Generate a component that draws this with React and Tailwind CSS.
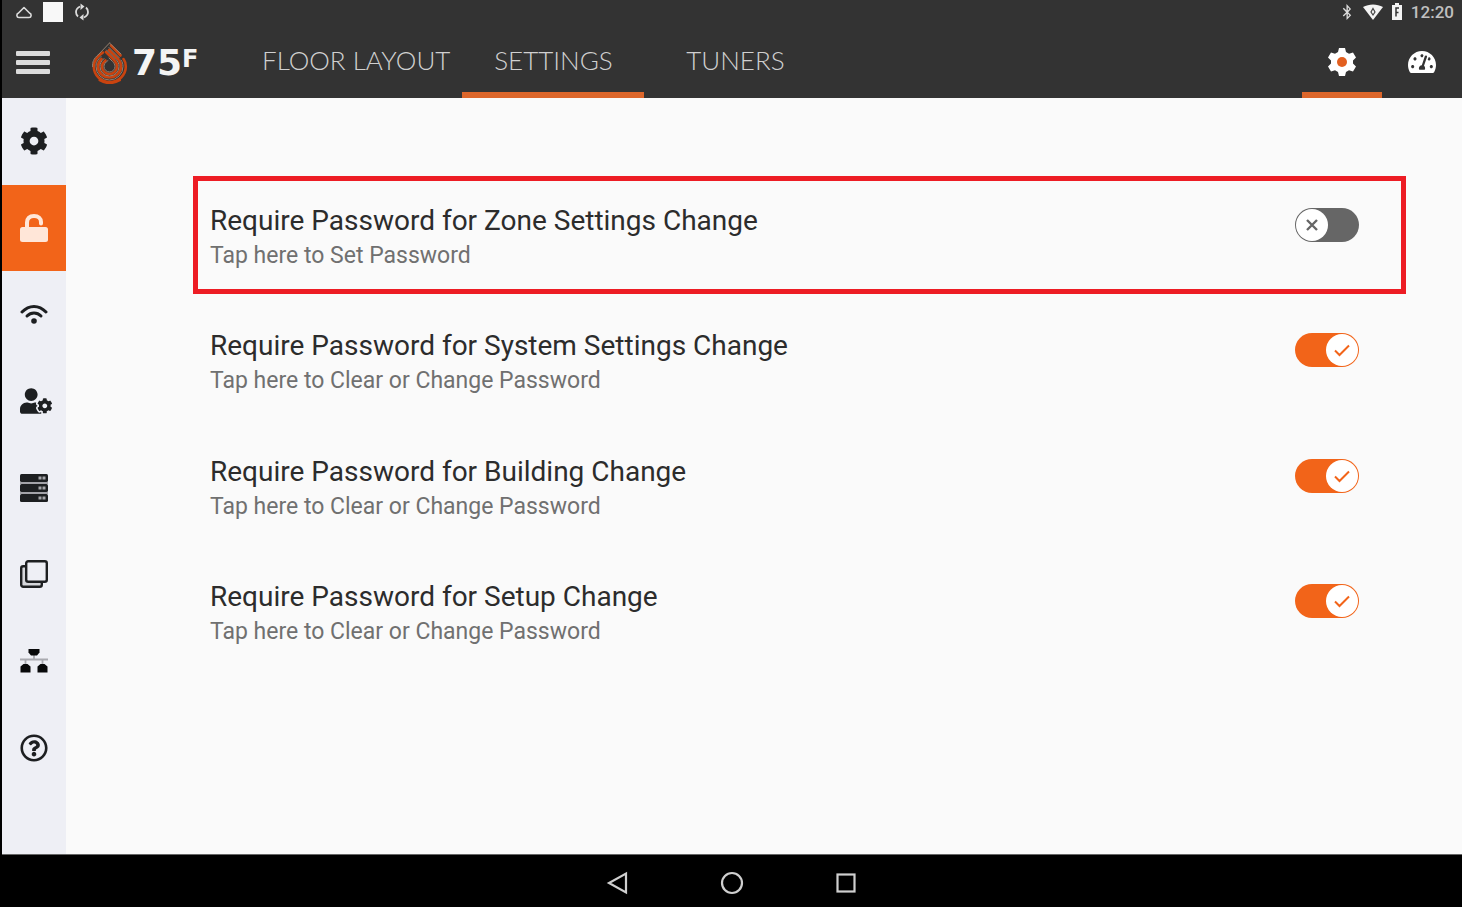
import React, { useState } from 'react';
import {
  FaBluetoothB,
  FaCog,
  FaRegQuestionCircle,
  FaTachometerAlt,
  FaUserCog,
} from 'react-icons/fa';

const UnlockIcon = () => (
  <svg className="h-7 w-7" viewBox="0 0 28 28" fill="none">
    <path d="M7 15V8.500C7 4.500 9.500 2 14 2s7 2.500 7 6v1.500" stroke="#ffe6d8" strokeWidth="4" strokeLinecap="round" />
    <rect x="0" y="13" width="28" height="15" rx="2.500" fill="#ffe6d8" />
  </svg>
);

const WifiIcon = () => (
  <svg className="h-7 w-7" viewBox="0 0 28 28" fill="none" stroke="#1d1f21" strokeWidth="3" strokeLinecap="round">
    <path d="M2 11C9 3.500 19 3.500 26 11" />
    <path d="M7 15c4-4 10-4 14 0" />
    <circle cx="14" cy="20" r="2.800" fill="#1d1f21" stroke="none" />
  </svg>
);

const ServerIcon = () => (
  <svg className="h-7 w-7" viewBox="0 0 28 28">
    {[0, 10, 20].map((y) => (
      <g key={y}>
        <rect y={y} width="28" height="8" rx="1.500" fill="#1d1f21" />
        <rect x="18.500" y={y + 2.5} width="3" height="3" fill="#a5a6aa" />
        <rect x="22.500" y={y + 2.5} width="3" height="3" fill="#a5a6aa" />
      </g>
    ))}
    <path d="M0 9h28M0 19h28" stroke="#8a8b90" strokeWidth="1.500" />
  </svg>
);

const CopyIcon = () => (
  <svg className="h-7 w-7" viewBox="0 0 28 28" stroke="#1d1f21" strokeWidth="2.400">
    <rect x="1.200" y="6.200" width="20.600" height="20.600" rx="2" fill="#d5d6da" />
    <rect x="6.200" y="1.200" width="20.600" height="20.600" rx="2" fill="#eeeff5" />
  </svg>
);

const NetworkIcon = () => (
  <svg className="h-7 w-7" viewBox="0 0 28 28">
    <path d="M0 12.500h28M14 8v4.500M5.500 12.500V18M22.500 12.500V18" stroke="#a9aab0" strokeWidth="1.800" fill="none" />
    <path d="M8.500 2h11v3.500l-2.500 3h-6l-2.500-3z" fill="#08090a" />
    <path d="M3.500 17h4l3 2.500V25.500H.5v-6zM20.500 17h4l3 2.500v6h-10v-6z" fill="#08090a" />
  </svg>
);

const LogoDrop = () => (
  <svg className="h-[42px] w-9" viewBox="0 0 36 42" fill="none" strokeLinecap="round">
    <g stroke="#c9430f" strokeWidth="2.600">
      <path d="M11 10.500C4.500 15 1.800 19 1.800 24.500a16 15.500 0 0 0 32 0c0-3-.8-5.500-2.300-7.500" />
      <path d="M9.500 17C7 19.500 6 22 6 24.500a11.500 11 0 0 0 23 0c0-2-.5-4-1.500-5.500" />
      <path d="M13.500 18.500c-2.500 2-3.500 4-3.500 6a7.500 7.500 0 0 0 15 0c0-2-1-4.500-3-6.500l-8-8" />
      <path d="M17 8l9.500 9.500M19 3.500l9.500 10" />
      <path d="M8 38c6 3.500 13 3.500 19.500 0" strokeWidth="3" />
    </g>
    <g stroke="#96806f" strokeWidth="1">
      <path d="M17.500 1L7 12C1 17 .5 20 .5 24.500M17.500 1l11.500 11" />
      <path d="M9 14.500c-3.500 3.500-5 6-5 10a13.500 13.500 0 0 0 27 0c0-2.500-.5-4.500-2-6.500" />
      <path d="M12 16.500c-3 3-4 5-4 8a9.500 9.500 0 0 0 19 0c0-3-1-5-3-7l-9.500-9.500" />
      <path d="M16 18.500c-3 2-4 4-4 6a5.500 5.500 0 0 0 11 0c0-2-1-3.500-2.500-5L17 16" />
      <path d="M17 5.500l10.500 10.500" />
    </g>
  </svg>
);

const sideItems = [
  { label: 'General', icon: <FaCog className="h-7 w-7" /> },
  { label: 'Security', icon: <UnlockIcon /> },
  { label: 'Wi-Fi', icon: <WifiIcon /> },
  { label: 'Users', icon: <FaUserCog className="ml-1 h-8 w-8" /> },
  { label: 'Devices', icon: <ServerIcon /> },
  { label: 'Copy', icon: <CopyIcon /> },
  { label: 'Network', icon: <NetworkIcon /> },
  { label: 'Help', icon: <FaRegQuestionCircle className="h-7 w-7" /> },
];

const tabs = ['FLOOR LAYOUT', 'SETTINGS', 'TUNERS'];

const initialRows = [
  { id: 'zone', title: 'Require Password for Zone Settings Change', enabled: false, highlighted: true },
  { id: 'system', title: 'Require Password for System Settings Change', enabled: true },
  { id: 'building', title: 'Require Password for Building Change', enabled: true },
  { id: 'setup', title: 'Require Password for Setup Change', enabled: true },
];

const StatusBar = () => (
  <div className="flex h-6 items-center justify-between pl-3 pr-2 text-[#dcdcdc]">
    <div className="flex items-center gap-[9px]">
      <svg className="h-4 w-5" viewBox="0 0 20 16" fill="none" stroke="currentColor" strokeWidth="1.600">
        <path d="M5 13.500h10c2.500 0 3-3.500.5-4.500L10 3.500 4.500 9C2 10 2.500 13.500 5 13.500z" strokeLinejoin="round" />
      </svg>
      <div className="h-5 w-5 bg-[#f8f8f8]" />
      <svg className="h-5 w-5" viewBox="0 0 20 20" fill="none" stroke="currentColor" strokeWidth="1.800">
        <path d="M8 4.500C5 6 4 8 4 10s.8 3.500 2 4.500M12 15.500c3-1.500 4-3.500 4-5.500s-.8-3.500-2-4.500" />
        <path d="M8.500 1.500l4 3-4 3.500zM11.500 12l-4 3.500 4 3z" fill="currentColor" stroke="none" />
      </svg>
    </div>
    <div className="flex items-center gap-2">
      <FaBluetoothB className="h-4 w-4" />
      <svg className="h-4 w-5" viewBox="0 0 20 16">
        <path d="M0 3C6-.5 14-.5 20 3L10 16z" fill="#f4f4f4" />
        <path d="M10 4.500l2 3.500-2 3-2-3z" fill="none" stroke="#444" strokeWidth="1.200" />
      </svg>
      <svg className="h-[18px] w-3" viewBox="0 0 12 18">
        <path d="M1 2h3V0h4v2h3v15H1z" fill="#f4f4f4" />
        <path d="M8 5H5v4.500h2.500M5 9v4.500" fill="none" stroke="#333" strokeWidth="1.500" />
      </svg>
      <span className="text-[17px] leading-6 font-medium text-[#c0c0c0]">12:20</span>
    </div>
  </div>
);

const Header = () => {
  const [active, setActive] = useState('SETTINGS');

  return (
    <header className="bg-[#333]">
      <StatusBar />
      <div className="flex h-[74px] items-stretch">
        <button aria-label="Menu" className="flex w-[62px] items-center justify-center pt-1">
          <svg className="h-6 w-[34px]" viewBox="0 0 34 24" fill="#dcdcdc">
            <rect y="0" width="34" height="5" rx="1" />
            <rect y="9" width="34" height="5" rx="1" />
            <rect y="18" width="34" height="5" rx="1" />
          </svg>
        </button>
        <a href="#" className="ml-7 flex w-[158px] items-center gap-1 pt-1 text-[#f4f4f4]">
          <LogoDrop />
          <span className="flex items-start font-['DejaVu_Sans',sans-serif] text-4xl leading-8 font-bold">
            75<span className="text-2xl leading-6">F</span>
          </span>
        </a>
        <nav className="flex">
          {tabs.map((tab) => (
            <button
              key={tab}
              onClick={() => setActive(tab)}
              className={`min-w-[182px] border-b-6 px-3 pt-1 font-[Lato,sans-serif] text-[26px] font-light text-[#d0d0d0] ${
                active === tab ? 'border-[#dc662b]' : 'border-transparent'
              }`}
            >
              {tab}
            </button>
          ))}
        </nav>
        <div className="ml-auto flex">
          <button
            aria-label="Configuration"
            className="flex w-20 items-center justify-center border-b-6 border-[#dc662b] pt-2"
          >
            <svg className="h-7 w-7" viewBox="0 0 28 28">
              <path
                d="M11 0h6l1 4 3 1.700L25 4.500l3 5-3 3v3l3 3-3 5-4-1.200-3 1.700-1 4h-6l-1-4-3-1.700-4 1.200-3-5 3-3v-3l-3-3 3-5 4 1.200L10 4z"
                fill="#fff"
              />
              <circle cx="14" cy="14" r="5" fill="#e25f1f" />
            </svg>
          </button>
          <button
            aria-label="Dashboard"
            className="flex w-20 items-center justify-center border-b-6 border-transparent pt-2 text-white"
          >
            <FaTachometerAlt className="h-7 w-7" />
          </button>
        </div>
      </div>
    </header>
  );
};

const Toggle = ({ id, checked, onChange }) => (
  <div className={`relative h-[34px] w-16 ${checked ? 'text-[#f26419]' : 'text-[#666]'}`}>
    <input
      id={id}
      type="checkbox"
      role="switch"
      checked={checked}
      onChange={onChange}
      className="block h-full w-full cursor-pointer appearance-none rounded-full bg-current"
    />
    <svg
      className={`pointer-events-none absolute top-px h-8 w-8 ${checked ? 'right-px' : 'left-px'}`}
      viewBox="0 0 32 32"
      fill="none"
      stroke="currentColor"
      strokeWidth="2.400"
    >
      <circle cx="16" cy="16" r="16" fill="#fff" stroke="none" />
      {checked ? <path d="M9 16.500l4.500 4.500 9.500-9.500" strokeWidth="2" /> : <path d="M11 11l10 10M21 11L11 21" />}
    </svg>
  </div>
);

const App = () => {
  const [rows, setRows] = useState(initialRows);

  const toggleRow = (id) => {
    setRows(rows.map((row) => (row.id === id ? { ...row, enabled: !row.enabled } : row)));
  };

  return (
    <div className="flex min-h-screen flex-col border-l-2 border-black bg-[#fafafa] font-[Roboto,sans-serif]">
      <Header />

      <div className="flex flex-1">
        <aside className="w-16 bg-[#eeeff5] text-[#1d1f21]">
          <div className="flex h-[693px] flex-col">
            {sideItems.map((item) => (
              <button
                key={item.label}
                aria-label={item.label}
                className={`flex w-full flex-1 items-center justify-center ${
                  item.label === 'Security' ? 'bg-[#f26419]' : ''
                }`}
              >
                {item.icon}
              </button>
            ))}
          </div>
        </aside>

        <main className="flex-1 pt-[78px] pr-14 pl-[127px]">
          <div className="flex h-[494px] flex-col justify-between">
            {rows.map((row) => (
              <div
                key={row.id}
                className={`flex h-[118px] items-start justify-between border-5 pt-[22px] pr-[42px] pl-3 ${
                  row.highlighted ? 'border-[#ed1c24]' : 'border-transparent'
                }`}
              >
                <div>
                  <label htmlFor={row.id} className="block text-[28px] leading-9 text-[#2c2c2c]">
                    {row.title}
                  </label>
                  <button className="block text-[23px] leading-[34px] text-[#707070]">
                    {row.enabled ? 'Tap here to Clear or Change Password' : 'Tap here to Set Password'}
                  </button>
                </div>
                <div className="pt-[5px]">
                  <Toggle id={row.id} checked={row.enabled} onChange={() => toggleRow(row.id)} />
                </div>
              </div>
            ))}
          </div>
        </main>
      </div>

      {/* Android navigation bar */}
      <footer className="flex h-[53px] items-center justify-center gap-[90px] border-t border-[#666] bg-black pt-1 text-[#cfcfcf]">
        <button aria-label="Back">
          <svg className="h-6 w-6" viewBox="0 0 24 24" fill="none" stroke="currentColor" strokeWidth="2.200">
            <path d="M20 2.500v19L3 12z" />
          </svg>
        </button>
        <button aria-label="Home">
          <svg className="h-6 w-6" viewBox="0 0 24 24" fill="none" stroke="currentColor" strokeWidth="2.200">
            <circle cx="12" cy="12" r="10" />
          </svg>
        </button>
        <button aria-label="Recent apps">
          <svg className="h-6 w-6" viewBox="0 0 24 24" fill="none" stroke="currentColor" strokeWidth="2.200">
            <rect x="3.500" y="3.500" width="17" height="17" />
          </svg>
        </button>
      </footer>
    </div>
  );
};

export default App;
